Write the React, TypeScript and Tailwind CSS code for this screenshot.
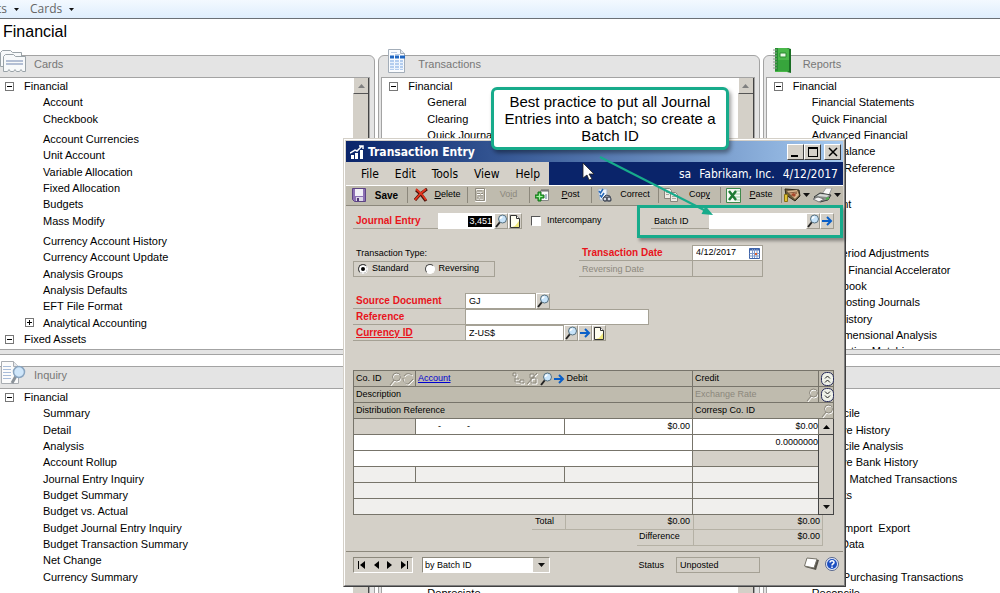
import type { ReactNode } from "react";

type TreeRow = {
  label: string;
  root?: boolean;
  toggle?: "+" | "-";
  gap?: boolean;
};

const root = (label: string): TreeRow => ({ label, root: true, toggle: "-" });
const item = (label: string, gap = false): TreeRow => ({ label, gap });

const cards: TreeRow[] = [
  root("Financial"),
  item("Account"),
  item("Checkbook"),
  item("Account Currencies", true),
  item("Unit Account"),
  item("Variable Allocation"),
  item("Fixed Allocation"),
  item("Budgets"),
  item("Mass Modify"),
  item("Currency Account History", true),
  item("Currency Account Update"),
  item("Analysis Groups"),
  item("Analysis Defaults"),
  item("EFT File Format"),
  { label: "Analytical Accounting", toggle: "+" },
  root("Fixed Assets"),
];

const transactions: TreeRow[] = [
  root("Financial"),
  item("General"),
  item("Clearing"),
  item("Quick Journal"),
];

const reports: TreeRow[] = [
  root("Financial"),
  item("Financial Statements"),
  item("Quick Financial"),
  item("Advanced Financial"),
  item("Trial Balance"),
  item("Cross-Reference"),
  item("Setup"),
  item("Account", true),
  item("Bank"),
  item("Assets"),
  item("VAT Period Adjustments"),
  item("Mgmt.  Financial Accelerator"),
  item("Checkbook"),
  item("Gen. Posting Journals"),
  item("Rate History"),
  item("Multidimensional Analysis"),
  item("Transaction Matching"),
];

const inquiry: TreeRow[] = [
  root("Financial"),
  item("Summary"),
  item("Detail"),
  item("Analysis"),
  item("Account Rollup"),
  item("Journal Entry Inquiry"),
  item("Budget Summary"),
  item("Budget vs. Actual"),
  item("Budget Journal Entry Inquiry"),
  item("Budget Transaction Summary"),
  item("Net Change"),
  item("Currency Summary"),
  item("Checkbook Register", true),
];

const setup: TreeRow[] = [
  root("Financial"),
  item("General Ledger"),
  item("Currency"),
  item("Account Format"),
  item("Segment"),
  item("Budgets"),
  item("Checkbook"),
  item("Audit Trail"),
  item("Bank"),
  item("Company"),
  item("Assets"),
  item("Books"),
  item("Depreciate"),
];

const routines: TreeRow[] = [
  root("Financial"),
  item("Reconcile"),
  item("Remove History"),
  item("Reconcile Analysis"),
  item("Remove Bank History"),
  item("Delete  Matched Transactions"),
  item("Budgets"),
  item("Rates"),
  item("Table Import  Export"),
  item("Clear Data"),
  item("Rates"),
  item("Batch Purchasing Transactions"),
  item("Reconcile"),
];

/* ---------- icons ---------- */

function CardsIcon() {
  return (
    <svg width="26" height="25" viewBox="0 0 26 25" fill="#f7f9fa" stroke="#9aa3a8">
      <path d="M.5 17.500V3.500l2-2h8l2 2h9v14z" />
      <path d="M3.500 22.500v-15l2-2h8l2 2h10v15h-3l-1.500-2-1.500 2h-3l-1.500-2-1.500 2h-3l-1.500-2-1.500 2z" />
      <path d="M6 12h17M6 15h17" stroke="#b3bfd4" strokeWidth="2" />
    </svg>
  );
}

function TransactionsIcon() {
  return (
    <svg width="20" height="25" viewBox="0 0 20 25">
      <path d="M1.500.5h12l4 4v19h-16z" fill="#fafcff" stroke="#a3adb8" />
      <path d="M13.500.5v4h4" fill="#dfe6ee" stroke="#a3adb8" />
      <path d="M4 3.500h6M8 5.500h5" stroke="#b9cbe4" />
      <path d="M3 8h4M8 8h4M13 8h5" stroke="#1f66c2" strokeWidth="3" />
      <path d="M3 11h4v10H3zM8 11h4v10H8zM13 11h3v10h-3z" fill="#b3cdef" />
      <path d="M3 13.500h14M3 16.500h14M3 19.500h14" stroke="#e8f1fc" />
    </svg>
  );
}

function ReportsIcon() {
  return (
    <svg width="20" height="27" viewBox="0 0 20 27">
      <path d="M4 1h12l3 1v24l-4-1H4z" fill="#1a6e24" />
      <path d="M3 1h12l2 1v22l-2 1H3z" fill="#4ab84a" />
      <path d="M3 1h3v23H3z" fill="#268f31" />
      <path d="M6 13h11v11H6z" fill="#37a53c" />
      <path d="M8 6h6v4H8z" fill="#eafbe8" stroke="#2a8a30" />
      <path d="M1 3h4M1 6h4M1 9h4M1 12h4M1 15h4M1 18h4M1 21h4" stroke="#8c968c" />
    </svg>
  );
}

function InquiryIcon() {
  return (
    <svg width="26" height="25" viewBox="0 0 26 25">
      <path d="M1.500 1.500h12l5 5v17h-17z" fill="#fbfbfb" stroke="#a9adb2" />
      <path d="M13.500 1.500v5h5" fill="#e5e8ec" stroke="#a9adb2" />
      <path d="M3 6.500h8M3 9.500h8M3 12.500h8M3 15.500h8M3 18.500h8" stroke="#a8bcd9" />
      <path d="M16 16l-4 7" stroke="#8b9299" strokeWidth="3" />
      <circle cx="19" cy="12" r="5.500" fill="#cfe6fa" stroke="#8aa5c0" strokeWidth="1.500" />
    </svg>
  );
}

function LookupIcon({ disabled = false }: { disabled?: boolean }) {
  return (
    <svg width="12" height="14" viewBox="0 0 12 14" fill="none" className="shrink-0">
      {disabled && (
        <>
          <path d="M6 9l-4 5" stroke="#fff" />
          <circle cx="8" cy="6" r="4" stroke="#fff" />
        </>
      )}
      <path d="M5 8l-4 5" stroke={disabled ? "#8c887d" : "#222"} strokeWidth={disabled ? 1 : 2} />
      <circle
        cx="7.500"
        cy="5"
        r="4"
        fill={disabled ? "none" : "#c8e4fa"}
        stroke={disabled ? "#8c887d" : "#56707f"}
      />
      {!disabled && <path d="M5.500 5a2 2 0 0 1 2-2" stroke="#fff" strokeWidth="1.500" />}
    </svg>
  );
}

function ArrowIcon() {
  return (
    <svg width="12" height="12" viewBox="0 0 12 12" fill="none" stroke="#0a5fc8" strokeWidth="2" className="shrink-0">
      <path d="M1 6h9M6 2l4 4-4 4" />
    </svg>
  );
}

function NoteIcon() {
  return (
    <svg width="10" height="13" viewBox="0 0 10 13" className="shrink-0">
      <path d="M.5.5h6l3 3v9h-9z" fill="#fffef0" stroke="#333" />
      <path d="M6.500.5v3h3" fill="#fff" stroke="#333" />
      <path d="M5 11l4-5v6H2z" fill="#f0e87c" />
    </svg>
  );
}

function CalendarIcon() {
  return (
    <svg width="11" height="11" viewBox="0 0 11 11" className="shrink-0">
      <path d="M.5.5h10v10H.5z" fill="#fff" stroke="#3d62a8" />
      <path d="M.5 1.500h10" stroke="#3d62a8" strokeWidth="2" />
      <path d="M.5 5.500h10M.5 8h10M3.500 1v9M5.500 1v9M8 1v9" stroke="#7f9acb" />
      <path d="M6 5h2v2H6z" fill="#e0602c" />
    </svg>
  );
}

function SaveIcon() {
  return (
    <svg width="14" height="14" viewBox="0 0 14 14">
      <path d="M.5.5h13v13H2.500l-2-2z" fill="#8d70b4" stroke="#5c4484" />
      <path d="M3 1h8v7H3z" fill="#f2f0f8" />
      <path d="M4 9h7v4H4z" fill="#dcd8e8" />
      <path d="M5 10h2v3H5z" fill="#503878" />
    </svg>
  );
}

function DeleteIcon() {
  return (
    <svg width="14" height="14" viewBox="0 0 14 14" fill="none">
      <path d="M2 2c4 3 7 6 10 11M13 1C8 4 4 8 1 12" stroke="#4a120a" strokeWidth="3" />
      <path d="M2 1c4 3 7 6 10 11M12 1C8 4 4 8 1 12" stroke="#e2351e" strokeWidth="2" />
    </svg>
  );
}

function VoidIcon() {
  return (
    <svg width="13" height="14" viewBox="0 0 13 14" fill="none">
      <path d="M2.500 1.500h9v12h-10v-10z" stroke="#fff" />
      <path d="M1.500.5h9v12h-9z" stroke="#8f8b80" />
      <path d="M3 4h5M3 6.500h3M7 6.500h2M4 9h5M3 11h2M6 11h3" stroke="#fff" />
      <path d="M3 3h5M3 5.500h3M7 5.500h2M4 8h5M3 10h2M6 10h3" stroke="#8f8b80" />
    </svg>
  );
}

function PostIcon() {
  return (
    <svg width="15" height="14" viewBox="0 0 15 14">
      <path d="M5.500 2.500h8v10h-8z" fill="#f8f8f8" stroke="#888" />
      <path d="M7 1v3M9 1v3M11 1v3M13 1v3" stroke="#666" />
      <path d="M11 6v5" stroke="#a8b8c8" strokeWidth="2" />
      <path d="M3 4h3v3h3v3H6v3H3v-3H0V7h3z" fill="#35b83b" stroke="#14701a" />
      <path d="M1.500 8.500h6M4.500 5.500v6" stroke="#a8eda8" />
    </svg>
  );
}

function CorrectIcon() {
  return (
    <svg width="15" height="14" viewBox="0 0 15 14">
      <path d="M1 1h9v11H3z" fill="#eef4fb" stroke="#a9b5c4" />
      <path d="M2 3l1.500 2L6 1M3 7l1.500 2L7 5" fill="none" stroke="#2468b8" strokeWidth="1.500" />
      <path d="M6 10l3-3 4 1 1 5H7z" fill="#8f97a3" stroke="#444c5a" />
      <circle cx="8" cy="11" r="2" fill="#d4dae4" stroke="#333a48" />
      <circle cx="12" cy="11" r="2" fill="#d4dae4" stroke="#333a48" />
    </svg>
  );
}

function CopyIcon() {
  return (
    <svg width="15" height="14" viewBox="0 0 15 14" fill="#eeece6" stroke="#88857c">
      <path d="M.5.5h5l2 2v8h-7z" />
      <path d="M6.500 4.500h5l2 2v7h-7z" />
      <path d="M2 4.500h3M2 6.500h3M8 8.500h4M8 10.500h4" stroke="#aaa79d" />
    </svg>
  );
}

function ExcelIcon() {
  return (
    <svg width="15" height="15" viewBox="0 0 15 15">
      <path d="M.5.500h14v14H.5z" fill="#f4faf4" stroke="#3f8a4c" />
      <path d="M9 3h5M9 6h5M9 9h5M9 12h5" stroke="#9ccaa4" />
      <path d="M3 3l7 9M10 3l-7 9" stroke="#1e7a34" strokeWidth="2.500" />
    </svg>
  );
}

function MoneyIcon() {
  return (
    <svg width="17" height="14" viewBox="0 0 17 14">
      <path d="M1 1l14 1 1 6-5 5-9-6z" fill="#6b5b3b" stroke="#2e2718" />
      <path d="M3 3l10-1 2 5-4 4z" fill="#d8b48c" />
      <path d="M5 5l8-1M7 8l6-3" stroke="#8a5a3c" />
      <path d="M7 6l3-1 2 2-2 2z" fill="#a8482c" />
      <path d="M.5 6.500h3v7h-3z" fill="#e0c235" stroke="#8a7212" />
    </svg>
  );
}

function PrinterIcon() {
  return (
    <svg width="20" height="15" viewBox="0 0 20 15">
      <path d="M9 6l4-6h6l-3 7z" fill="#fbfbfb" stroke="#999" />
      <path d="M1 9l6-4 11 2-3 5-8 2z" fill="#8a8f8c" stroke="#3b3f3e" />
      <path d="M4 8l3-2 9 1-2 2z" fill="#d8dbd9" />
      <path d="M0 11l5-2 6 2-5 3z" fill="#f4f4f4" stroke="#777" />
      <path d="M13 11l3-1" stroke="#4bb04b" strokeWidth="2" />
    </svg>
  );
}

function DropArrow() {
  return (
    <svg width="7" height="4" viewBox="0 0 7 4">
      <path d="M0 0h7L3.500 4z" fill="#111" />
    </svg>
  );
}

function ChartIcon() {
  return (
    <svg width="14" height="14" viewBox="0 0 14 14">
      <path d="M1 10h3v4H1zM5 8h3v6H5zM10 5h3v9h-3z" fill="#fff" />
      <path d="M0 8l5-3 2 1 5-5M9 1h4v3" fill="none" stroke="#fff" strokeWidth="1.500" />
    </svg>
  );
}

function ExpandIcon({ down = false }: { down?: boolean }) {
  return (
    <svg width="13" height="14" viewBox="0 0 13 14" fill="none">
      <rect x=".5" y=".5" width="12" height="13" rx="5" fill="#eef1e8" stroke="#2b2f5c" />
      {down ? (
        <path d="M4 3.500l2.500 2.500L9 3.500M4 7.500l2.500 2.500L9 7.500" stroke="#222" />
      ) : (
        <path d="M4 6.500L6.500 4 9 6.500M4 10.500L6.500 8 9 10.500" stroke="#222" />
      )}
    </svg>
  );
}

function GhostIcon({ d }: { d: string }) {
  return (
    <svg width="13" height="14" viewBox="0 0 13 14" fill="none">
      <path d={d} stroke="#fff" transform="translate(1 1)" />
      <path d={d} stroke="#8c887d" />
    </svg>
  );
}

/* ---------- navigation panes ---------- */

function Tree({ rows }: { rows: TreeRow[] }) {
  return (
    <ul className="min-w-0 flex-1 overflow-hidden text-[11px] leading-4 whitespace-pre text-black">
      {rows.map((row, i) => (
        <li
          key={i}
          className={`flex items-center h-4 nth-[3n]:h-[17px] ${row.gap ? "mt-1" : ""} ${
            row.root ? "pl-[7px] gap-[10px]" : row.toggle ? "pl-[27px] gap-[9px]" : "pl-[45px]"
          }`}
        >
          {row.toggle && (
            <button
              aria-label={`Toggle ${row.label}`}
              className="relative flex size-[9px] shrink-0 items-center justify-center border border-[#777] bg-white"
            >
              <span className="h-px w-[5px] bg-black" />
              {row.toggle === "+" && <span className="absolute h-[5px] w-px bg-black" />}
            </button>
          )}
          <a href="#">{row.label}</a>
        </li>
      ))}
    </ul>
  );
}

function Panel({ title, icon, rows }: { title: string; icon?: ReactNode; rows: TreeRow[] }) {
  return (
    <section className="flex min-h-0 flex-col rounded-t-md border border-[#a3a3a3] bg-[#e4e4e4] pb-1">
      <header className="flex h-[21px] shrink-0 items-end">
        <div className="flex w-9 shrink-0 justify-center pb-[3px]">{icon}</div>
        <h2 className="ml-[3px] self-start text-[11px] leading-4 text-[#777]">{title}</h2>
      </header>
      <div className="mr-1 ml-[2px] flex min-h-0 flex-1 border border-[#a3a3a3] bg-white">
        <Tree rows={rows} />
        <div className="w-4 shrink-0 border-r border-[#444] bg-[#d4d0c8]">
          <button
            aria-label="Scroll up"
            className="flex h-4 w-full items-center justify-center border-b border-l border-b-[#555] border-l-white"
          >
            <svg width="7" height="4" viewBox="0 0 7 4">
              <path d="M0 4h7L3.500 0z" fill="#808080" />
            </svg>
          </button>
        </div>
      </div>
    </section>
  );
}

/* ---------- transaction window ---------- */

function FieldButton({ label, children }: { label: string; children: ReactNode }) {
  return (
    <button
      aria-label={label}
      className="flex h-4 w-[14px] shrink-0 items-center justify-center border border-[#a09c90] border-l-white border-t-white bg-[#d4d0c8]"
    >
      {children}
    </button>
  );
}

function ToolButton({
  icon,
  width,
  children,
  className = "",
}: {
  icon: ReactNode;
  width: string;
  children: ReactNode;
  className?: string;
}) {
  return (
    <button className={`flex h-4 items-center border-r border-[#8c887c] pl-[5px] ${width} ${className}`}>
      <span className="flex w-[15px] shrink-0 justify-center">{icon}</span>
      <span className="flex-1 text-center">{children}</span>
    </button>
  );
}

function RequiredLabel({ htmlFor, width, children }: { htmlFor: string; width: string; children: ReactNode }) {
  return (
    <label
      htmlFor={htmlFor}
      className={`h-4 shrink-0 border-b border-[#a5a195] pl-[3px] text-[10px] leading-4 font-bold text-[#e8141c] ${width}`}
    >
      {children}
    </label>
  );
}

const input = "h-4 border border-[#a5a195] bg-white px-[3px] outline-none";
const th = "h-4 border border-[#77746a] p-0 pl-[2px] text-left font-normal";
const td = "h-4 border border-[#77746a] p-0";

function DistributionTable() {
  return (
    <table className="mt-[29px] w-full table-fixed border-collapse leading-[15px]">
      <colgroup>
        <col className="w-[62px]" />
        <col className="w-[149px]" />
        <col className="w-[128px]" />
        <col />
        <col className="w-[15px]" />
      </colgroup>
      <thead className="bg-[#bfbbae]">
        <tr>
          <th className={th}>
            <div className="flex h-[15px] items-center justify-between">
              Co. ID
              <span className="flex gap-px">
                <LookupIcon disabled />
                <GhostIcon d="M2 4c2-3 5-3 8-1M1 6c0 4 3 6 5 6l5-5" />
              </span>
            </div>
          </th>
          <th className={`${th} border-r-0`}>
            <div className="flex h-[15px] items-center justify-between">
              <a href="#" className="text-[#0000d0] underline">
                Account
              </a>
              <span className="flex items-center gap-px">
                <GhostIcon d="M1 1h3v3H1zM3 4v6h5M3 7h4M8 8h4v3H8z" />
                <GhostIcon d="M1 12L11 1M4 2h4v4H4zM5 6h5v5H5z" />
                <LookupIcon />
                <ArrowIcon />
              </span>
            </div>
          </th>
          <th className={`${th} border-l-0`}>Debit</th>
          <th className={th}>Credit</th>
          <th className={`${th} pl-0`}>
            <button aria-label="Hide detail" className="flex">
              <ExpandIcon />
            </button>
          </th>
        </tr>
        <tr>
          <th className={th} colSpan={3}>
            Description
          </th>
          <th className={`${th} text-[#8c887d]`}>
            <div className="flex h-[15px] items-center justify-between">
              Exchange Rate
              <LookupIcon disabled />
            </div>
          </th>
          <th className={`${th} pl-0`}>
            <button aria-label="Show detail" className="flex">
              <ExpandIcon down />
            </button>
          </th>
        </tr>
        <tr>
          <th className={th} colSpan={3}>
            Distribution Reference
          </th>
          <th className={`${th} border-r-0`}>Corresp Co. ID</th>
          <th className={`${th} border-l-0 pl-0`}>
            <LookupIcon disabled />
          </th>
        </tr>
      </thead>
      <tbody className="bg-white">
        <tr>
          <td className={`${td} bg-[#d4d0c8]`} />
          <td className={td}>
            <span className="flex gap-[26px] pl-[22px]">
              <span>-</span>
              <span>-</span>
            </span>
          </td>
          <td className={`${td} pr-[2px] text-right`}>$0.00</td>
          <td className={`${td} text-right`}>$0.00</td>
          <td rowSpan={6} className="h-px border border-[#444] bg-[#d4d0c8] p-0">
            <div className="flex h-full flex-col justify-between">
              <button
                aria-label="Scroll lines up"
                className="flex h-4 items-center justify-center border-b border-[#444]"
              >
                <svg width="7" height="4" viewBox="0 0 7 4">
                  <path d="M0 4h7L3.500 0z" />
                </svg>
              </button>
              <button
                aria-label="Scroll lines down"
                className="flex h-4 items-center justify-center border-t border-[#444]"
              >
                <DropArrow />
              </button>
            </div>
          </td>
        </tr>
        <tr>
          <td className={td} colSpan={3} />
          <td className={`${td} text-right`}>0.0000000</td>
        </tr>
        <tr>
          <td className={td} colSpan={3} />
          <td className={`${td} bg-[#d4d0c8]`} />
        </tr>
        <tr className="bg-[#f0efed]">
          <td className={td} />
          <td className={td} />
          <td className={td} />
          <td className={td} />
        </tr>
        <tr className="bg-[#f0efed]">
          <td className={td} colSpan={3} />
          <td className={td} />
        </tr>
        <tr className="bg-[#f0efed]">
          <td className={td} colSpan={3} />
          <td className={td} />
        </tr>
      </tbody>
    </table>
  );
}

function TransactionWindow() {
  return (
    <div className="absolute top-[138px] left-[343px] flex w-[503px] flex-col border border-[#d4d0c8] border-r-[#404040] border-b-[#404040] bg-[#d4d0c8] text-[9px] text-black">
      <div className="flex flex-col border border-white border-r-[#808080] border-b-[#808080] p-px">
        <div className="flex h-[21px] items-center gap-1 bg-linear-to-r from-[#0a246a] to-[#a6caf0] pr-[2px] pl-1 font-['DejaVu_Sans_Condensed','DejaVu_Sans',sans-serif]">
          <ChartIcon />
          <h1 className="flex-1 text-[12px] font-bold text-white">Transaction Entry</h1>
          <div className="flex text-black">
            <button
              aria-label="Minimize"
              className="flex h-4 w-[17px] items-end border border-white border-r-[#404040] border-b-[#404040] bg-[#d4d0c8] pb-[2px] pl-[3px]"
            >
              <span className="h-[2px] w-[7px] bg-black" />
            </button>
            <button
              aria-label="Maximize"
              className="flex h-4 w-[17px] items-center justify-center border border-white border-r-[#404040] border-b-[#404040] bg-[#d4d0c8]"
            >
              <span className="h-[10px] w-[10px] border border-t-2 border-black" />
            </button>
            <button
              aria-label="Close"
              className="ml-[3px] flex h-4 w-[17px] items-center justify-center border border-white border-r-[#404040] border-b-[#404040] bg-[#d4d0c8]"
            >
              <svg width="10" height="10" viewBox="0 0 10 10" stroke="#000" strokeWidth="1.500">
                <path d="M1 1l8 8M9 1L1 9" />
              </svg>
            </button>
          </div>
        </div>

        <div className="flex h-[23px] font-['DejaVu_Sans_Condensed','DejaVu_Sans',sans-serif] text-[12px]">
          <nav className="flex w-[203px] items-center justify-between pr-[9px] pl-[15px]">
            <button>File</button>
            <button>Edit</button>
            <button>Tools</button>
            <button>View</button>
            <button>Help</button>
          </nav>
          <div className="flex flex-1 items-center justify-end gap-2 bg-[#0a246a] pr-[5px] text-white">
            <span>sa</span>
            <span>Fabrikam, Inc.</span>
            <span>4/12/2017</span>
          </div>
        </div>

        <div className="flex h-5 items-center overflow-hidden border-t border-white bg-[#bfbbae] pb-px">
          <ToolButton icon={<SaveIcon />} width="w-[62px]" className="text-[10px] font-bold">
            Save
          </ToolButton>
          <ToolButton icon={<DeleteIcon />} width="w-[60px]">
            <u>D</u>elete
          </ToolButton>
          <ToolButton icon={<VoidIcon />} width="w-[62px]" className="text-[#8c887d]">
            Vo<u>i</u>d
          </ToolButton>
          <ToolButton icon={<PostIcon />} width="w-[62px]">
            <u>P</u>ost
          </ToolButton>
          <ToolButton icon={<CorrectIcon />} width="w-[67px]">
            Correct
          </ToolButton>
          <ToolButton icon={<CopyIcon />} width="w-[62px]">
            Cop<u>y</u>
          </ToolButton>
          <ToolButton icon={<ExcelIcon />} width="w-[61px]">
            <u>P</u>aste
          </ToolButton>
          <button aria-label="Additional" className="flex items-center gap-[2px] pl-[2px]">
            <MoneyIcon />
            <DropArrow />
          </button>
          <button aria-label="Print" className="flex items-center gap-px pl-[3px]">
            <PrinterIcon />
            <DropArrow />
          </button>
        </div>

        <form className="border-t border-[#8c887c] pt-[7px] pr-[9px] pl-[7px]">
          <div className="flex items-center">
            <RequiredLabel htmlFor="journal" width="w-[85px]">
              Journal Entry
            </RequiredLabel>
            <div className="flex h-4 w-[56px] items-center justify-end bg-white pr-[2px]">
              <input
                id="journal"
                defaultValue="3,451"
                className="h-[11px] w-6 bg-black text-right leading-[11px] text-white outline-none"
              />
            </div>
            <FieldButton label="Look up journal entry">
              <LookupIcon />
            </FieldButton>
            <FieldButton label="Journal entry note">
              <NoteIcon />
            </FieldButton>
            <input
              id="intercompany"
              type="checkbox"
              className="ml-[9px] size-[10px] appearance-none border border-[#555] border-r-white border-b-white bg-white"
            />
            <label htmlFor="intercompany" className="ml-[6px]">
              Intercompany
            </label>
            <label htmlFor="batch" className="ml-auto h-4 w-[58px] border-b border-[#a5a195] pl-[3px] leading-4">
              Batch ID
            </label>
            <input id="batch" className="h-4 w-[97px] bg-white outline-none" />
            <FieldButton label="Look up batch">
              <LookupIcon />
            </FieldButton>
            <FieldButton label="Open batch">
              <ArrowIcon />
            </FieldButton>
          </div>

          <div className="mt-4 flex">
            <fieldset className="w-[142px]">
              <legend className="h-4 pl-[3px] leading-4">Transaction Type:</legend>
              <div className="flex h-4 items-center border border-[#a5a195] pl-1">
                <label className="flex items-center gap-1">
                  <input
                    type="radio"
                    name="type"
                    defaultChecked
                    className="size-[10px] appearance-none rounded-full border border-[#444] border-r-white border-b-white bg-white checked:bg-black checked:shadow-[inset_0_0_0_2px_white]"
                  />
                  Standard
                </label>
                <label className="ml-4 flex items-center gap-1">
                  <input
                    type="radio"
                    name="type"
                    className="size-[10px] appearance-none rounded-full border border-[#444] border-r-white border-b-white bg-white checked:bg-black checked:shadow-[inset_0_0_0_2px_white]"
                  />
                  Reversing
                </label>
              </div>
            </fieldset>
            <div className="mr-[71px] ml-auto">
              <div className="flex">
                <RequiredLabel htmlFor="date" width="w-[113px]">
                  Transaction Date
                </RequiredLabel>
                <div className="flex h-4 w-[71px] items-center border border-[#a5a195] bg-white pr-[2px]">
                  <input id="date" defaultValue="4/12/2017" className="w-full min-w-0 pl-[3px] outline-none" />
                  <CalendarIcon />
                </div>
              </div>
              <div className="flex text-[#8c887d]">
                <label htmlFor="reversing" className="h-4 w-[113px] border-b border-[#a5a195] pl-[3px] leading-4">
                  Reversing Date
                </label>
                <input id="reversing" disabled className="h-4 w-[71px] border border-t-0 border-[#a5a195]" />
              </div>
            </div>
          </div>

          <div className="mt-4">
            <div className="flex">
              <RequiredLabel htmlFor="source" width="w-[112px]">
                Source Document
              </RequiredLabel>
              <input id="source" defaultValue="GJ" className={`${input} w-[71px]`} />
              <FieldButton label="Look up source document">
                <LookupIcon />
              </FieldButton>
            </div>
            <div className="flex">
              <RequiredLabel htmlFor="reference" width="w-[112px]">
                Reference
              </RequiredLabel>
              <input id="reference" className={`${input} w-[184px]`} />
            </div>
            <div className="flex">
              <RequiredLabel htmlFor="currency" width="w-[112px]">
                <u>Currency ID</u>
              </RequiredLabel>
              <input id="currency" defaultValue="Z-US$" className={`${input} w-[99px]`} />
              <FieldButton label="Look up currency">
                <LookupIcon />
              </FieldButton>
              <FieldButton label="Open currency">
                <ArrowIcon />
              </FieldButton>
              <FieldButton label="Currency note">
                <NoteIcon />
              </FieldButton>
            </div>
          </div>

          <DistributionTable />

          <div className="mr-[11px] leading-[13px]">
            <div className="flex h-[15px] justify-end">
              <span className="w-[33px] border-b border-[#b5b1a5] pl-[3px]">Total</span>
              <output className="w-[128px] border-b border-l border-[#b5b1a5] pr-[3px] text-right">$0.00</output>
              <output className="w-[130px] border border-t-0 border-[#b5b1a5] pr-[2px] text-right">$0.00</output>
            </div>
            <div className="flex h-4 justify-end">
              <span className="w-[56px] border-b border-[#b5b1a5] pl-[2px]">Difference</span>
              <output className="w-[130px] border border-t-0 border-[#b5b1a5] pr-[2px] text-right">$0.00</output>
            </div>
          </div>
        </form>

        <footer className="mt-[5px] flex h-[33px] items-start border-t border-[#8c887c] pt-[5px] pr-1 pl-[7px]">
          <div className="flex h-4 w-[60px] items-center justify-between border border-[#8c887c] border-r-white border-b-white px-1">
            <button aria-label="First">
              <svg width="7" height="8" viewBox="0 0 7 8">
                <path d="M0 0h1v8H0zM7 0v8L2 4z" />
              </svg>
            </button>
            <button aria-label="Previous">
              <svg width="5" height="8" viewBox="0 0 5 8">
                <path d="M5 0v8L0 4z" />
              </svg>
            </button>
            <button aria-label="Next">
              <svg width="5" height="8" viewBox="0 0 5 8">
                <path d="M0 0v8l5-4z" />
              </svg>
            </button>
            <button aria-label="Last">
              <svg width="7" height="8" viewBox="0 0 7 8">
                <path d="M6 0h1v8H6zM0 0v8l5-4z" />
              </svg>
            </button>
          </div>
          <div className="relative ml-[9px]">
            <select
              aria-label="Sort"
              className="block h-4 w-[128px] appearance-none border border-[#8c887c] border-r-white border-b-white bg-white pl-[2px] leading-[14px] outline-none"
            >
              <option>by Batch ID</option>
            </select>
            <span className="pointer-events-none absolute inset-y-px right-px flex w-4 items-center justify-center bg-[#d4d0c8]">
              <DropArrow />
            </span>
          </div>
          <span className="ml-auto leading-4">Status</span>
          <output className="ml-3 h-4 w-[84px] border border-[#a5a195] pl-[3px] leading-[14px]">Unposted</output>
          <button aria-label="Note" className="ml-11">
            <svg width="16" height="14" viewBox="0 0 16 14">
              <path d="M4 1l11 2-3 10-11-3z" fill="#55524a" />
              <path d="M3 1l10 1-3 9L.5 9z" fill="#fff" stroke="#77746a" />
            </svg>
          </button>
          <button aria-label="Help" className="ml-[5px]">
            <svg width="14" height="14" viewBox="0 0 14 14" fill="none">
              <circle cx="7" cy="7" r="6.500" fill="#e8eefc" stroke="#55658c" />
              <circle cx="7" cy="7" r="5" fill="#1d4fc0" />
              <path d="M5 5.500C5 3 9 3 9 5.500 9 7 7 6.500 7 8.500M7 9.500V11" stroke="#fff" strokeWidth="1.500" />
            </svg>
          </button>
        </footer>
      </div>
    </div>
  );
}

export default function App() {
  return (
    <div className="relative flex h-screen flex-col overflow-hidden bg-white font-['Liberation_Sans',sans-serif]">
      <div className="flex h-[19px] shrink-0 items-center gap-[11px] border-b border-[#6b7076] bg-linear-to-b from-[#f3f9ff] to-[#dfeefd] font-['Open_Sans',sans-serif] text-[12px] leading-4 text-[#666]">
        <button className="-ml-[3px] flex items-center gap-[7px]">
          ts
          <svg width="5" height="3" viewBox="0 0 5 3">
            <path d="M0 0h5L2.500 3z" fill="#111" />
          </svg>
        </button>
        <button className="flex items-center gap-[7px]">
          Cards
          <svg width="5" height="3" viewBox="0 0 5 3">
            <path d="M0 0h5L2.500 3z" fill="#111" />
          </svg>
        </button>
      </div>
      <div className="h-9 shrink-0 pt-px pl-[3px] text-[16px] leading-6 text-black">Financial</div>

      {/* Panes run past the right and bottom edges of the view */}
      <main className="-ml-[6px] grid w-[115%] shrink-0 grid-cols-3 grid-rows-[300px_300px] gap-x-[3px] gap-y-[11px]">
        <Panel title="Cards" icon={<CardsIcon />} rows={cards} />
        <Panel title="Transactions" icon={<TransactionsIcon />} rows={transactions} />
        <Panel title="Reports" icon={<ReportsIcon />} rows={reports} />
        <Panel title="Inquiry" icon={<InquiryIcon />} rows={inquiry} />
        <Panel title="Setup" rows={setup} />
        <Panel title="Tools" rows={routines} />
      </main>

      <TransactionWindow />

      {/* Highlight and callout over the window */}
      <div className="pointer-events-none absolute top-[205px] left-[637px] h-[33px] w-[206px] border-3 border-[#17ab8b] shadow-[2px_3px_3px_rgba(0,0,0,0.35)]" />
      <svg className="pointer-events-none absolute top-[150px] left-[580px]" width="140" height="70" viewBox="0 0 140 70">
        <path d="M20 7l106 54" stroke="#17ab8b" strokeWidth="2" />
        <path d="M133 65l-11.500-1 4-8z" fill="#17ab8b" />
        <path d="M3 13v15l4-3 2 5 3-1-3-5h5z" fill="#fff" stroke="#222" strokeWidth=".8" />
      </svg>
      <div className="absolute top-[87px] left-[491px] w-[238px] rounded-md border-3 border-[#17ab8b] bg-white px-1 py-[3px] text-center text-[15px] leading-[17px] text-black shadow-[2px_3px_4px_rgba(0,0,0,0.4)]">
        Best practice to put all Journal Entries into a batch; so create a Batch ID
      </div>
    </div>
  );
}
